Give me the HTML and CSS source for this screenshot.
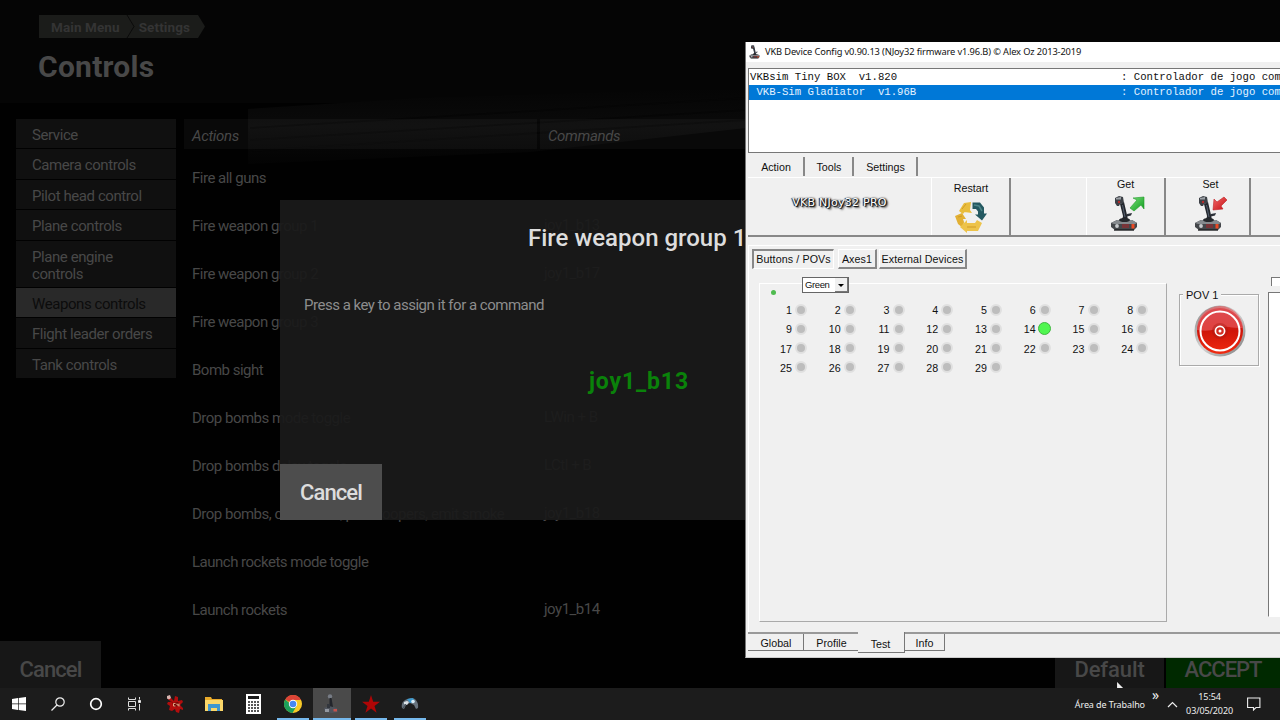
FILE: index.html
```
<!DOCTYPE html>
<html lang="en">
<head>
    <meta charset="UTF-8">
    <meta name="viewport" content="width=device-width, initial-scale=1.0">
    <title>Controls</title>
    <link rel="stylesheet" href="styles.css">
</head>
<body>
    <svg width="0" height="0" class="defs">
        <defs>
            <linearGradient id="greenArrow" x1="0" y1="0" x2="1" y2="1">
                <stop offset="0" stop-color="#7be07b"/><stop offset="1" stop-color="#0c9a1c"/>
            </linearGradient>
            <linearGradient id="redArrow" x1="0" y1="0" x2="1" y2="1">
                <stop offset="0" stop-color="#f26a6a"/><stop offset="1" stop-color="#c40d12"/>
            </linearGradient>
            <linearGradient id="ring" x1="0" y1="0" x2="1" y2="1">
                <stop offset="0" stop-color="#888"/><stop offset=".5" stop-color="#d5d5d5"/><stop offset="1" stop-color="#777"/>
            </linearGradient>
            <linearGradient id="redBall" x1="0" y1="0" x2="0" y2="1">
                <stop offset="0" stop-color="#c8323a"/><stop offset=".5" stop-color="#cf1509"/><stop offset="1" stop-color="#f02a10"/>
            </linearGradient>
            <linearGradient id="fade" x1="0" y1="0" x2="0" y2="1">
                <stop offset="0" stop-color="#050505"/><stop offset=".5" stop-color="#0a0a0a"/><stop offset="1" stop-color="#030303"/>
            </linearGradient>
            <symbol id="stick" viewBox="0 0 28 36">
                <path d="M1 27l6-3h15l5 3v4l-3 3H5l-4-3z" fill="#44474b"/>
                <path d="M1 27l6-3h15l5 3-2 1H4z" fill="#85898d"/>
                <path d="M11 24c1-2 2-2 2-4L10 8l4-2 3 13 1 5z" fill="#23272d"/>
                <path d="M12.500 9l2.500 12" stroke="#566070" stroke-width="1" fill="none"/>
                <path d="M17 18l5-1-1 2.500-4 1z" fill="#2b3038"/>
                <path d="M5 2l4-2 4 1 1 6-4 1-1 2H7L5 7z" fill="#3d4147"/>
                <path d="M6 2l5-1v2.500H6z" fill="#9da1a6"/>
                <circle cx="9" cy="6" r="1.200" fill="#b52d2d"/>
                <ellipse cx="14.500" cy="24" rx="5.500" ry="2" fill="#25282c"/>
                <circle cx="7" cy="30" r="1.900" fill="#c9cccf"/>
                <path d="M12 28h7v4h-7z" fill="#783438"/>
                <path d="M21.500 28h3v4.500h-3z" fill="#ec4a24"/>
                <path d="M4 34h20" stroke="#1d1f22" stroke-width="1.400"/>
            </symbol>
        </defs>
    </svg>

    <div class="desktop">
        <div class="game">
            <svg class="scenery" viewBox="0 0 1280 688">
                <path d="M248 109L420 98 746 88v40L530 152 248 164z" fill="url(#fade)"/>
                <path d="M250 128L746 98M250 140L746 110M250 151L746 120" stroke="#060606" stroke-width="1.500"/>
            </svg>
            <div class="header">
                <div class="breadcrumb">
                    <svg class="crumb-bg" viewBox="0 0 167 23"><path d="M0 0h159l7 11.500-7 11.500H0z" fill="#1b1c1a"/><path d="M88 0l7 11.500-7 11.500" fill="none" stroke="#0b0b0b"/></svg>
                    <span>Main Menu</span>
                    <span>Settings</span>
                </div>
                <h1>Controls</h1>
            </div>
            <div class="content">
                <div class="sidebar">
                    <div class="item">Service</div>
                    <div class="item">Camera controls</div>
                    <div class="item">Pilot head control</div>
                    <div class="item">Plane controls</div>
                    <div class="item tall">Plane engine<br>controls</div>
                    <div class="item active">Weapons controls</div>
                    <div class="item">Flight leader orders</div>
                    <div class="item">Tank controls</div>
                </div>
                <div class="bindings">
                    <div class="row heading"><span>Actions</span><span>Commands</span></div>
                    <div class="row"><span>Fire all guns</span><span></span></div>
                    <div class="row"><span>Fire weapon group 1</span><span>joy1_b13</span></div>
                    <div class="row"><span>Fire weapon group 2</span><span>joy1_b17</span></div>
                    <div class="row"><span>Fire weapon group 3</span><span></span></div>
                    <div class="row"><span>Bomb sight</span><span></span></div>
                    <div class="row"><span>Drop bombs mode toggle</span><span>LWin + B</span></div>
                    <div class="row"><span>Drop bombs delay toggle</span><span>LCtl + B</span></div>
                    <div class="row"><span>Drop bombs, containers, paratroopers, emit smoke</span><span>joy1_b18</span></div>
                    <div class="row"><span>Launch rockets mode toggle</span><span></span></div>
                    <div class="row"><span>Launch rockets</span><span>joy1_b14</span></div>
                </div>
            </div>
            <div class="actions">
                <div class="action cancel">Cancel</div>
                <div class="action default">Default</div>
                <div class="action accept">ACCEPT</div>
            </div>
        </div>

        <div class="modal">
            <div class="modal-title">Fire weapon group 1</div>
            <div class="modal-text">Press a key to assign it for a command</div>
            <div class="modal-key">joy1_b13</div>
            <div class="modal-cancel">Cancel</div>
        </div>

        <div class="window">
            <div class="titlebar">
                <svg width="11" height="14"><use href="#stick"/></svg>
                <span>VKB Device Config v0.90.13 (NJoy32 firmware v1.96.B) © Alex Oz 2013-2019</span>
            </div>
            <div class="devices">
                <div class="device"><span>VKBsim Tiny BOX  v1.820</span><span>: Controlador de jogo com</span></div>
                <div class="device selected"><span> VKB-Sim Gladiator  v1.96B</span><span>: Controlador de jogo com</span></div>
            </div>
            <div class="tabs">
                <div class="tab tab-action">Action</div>
                <div class="tab tab-tools">Tools</div>
                <div class="tab tab-settings">Settings</div>
            </div>
            <div class="toolbar">
                <div class="tool brand"><span>VKB NJoy32 PRO</span></div>
                <div class="tool restart">
                    <span>Restart</span>
                    <svg width="32" height="32" viewBox="0 0 32 32">
                        <path d="M4 10l5-8 7-1-1 8 2 3-8-1 2-2-3 4z" fill="#e9bd3c"/>
                        <path d="M17.500 1.500h7.500l4 5v6l3 0-5 7-7-6h3v-3l-2-2.500h-3.500z" fill="#245961"/>
                        <path d="M0 15l7-3 4 6-3 0 1 3-1 6-5-4z" fill="#e2b033"/>
                        <path d="M5 26l7-7v3h8l2-3 5 3-4 8h-11v2z" fill="#edc34a"/>
                        <path d="M7 8l4-5M3 16l4-1M12 26h9" fill="none" stroke="#d09b26"/>
                        <path d="M19 4l5 1 3 5" fill="none" stroke="#4d8588" stroke-width="1.500"/>
                    </svg>
                </div>
                <div class="tool empty"></div>
                <div class="tool get">
                    <span>Get</span>
                    <svg width="36" height="37" viewBox="0 0 36 37">
                        <use href="#stick" width="28" height="36" y="1"/>
                        <path d="M20 13l7-8-4-2 11-1v12l-3-4-7 6z" fill="url(#greenArrow)" stroke="#219b2a" stroke-width=".6"/>
                    </svg>
                </div>
                <div class="tool set">
                    <span>Set</span>
                    <svg width="36" height="37" viewBox="0 0 36 37">
                        <use href="#stick" width="28" height="36" y="1"/>
                        <path d="M30 2l3 3-6 6 2 3-10 1 1-11 3 3z" fill="url(#redArrow)" stroke="#c02025" stroke-width=".6"/>
                    </svg>
                </div>
            </div>
            <div class="panel">
                <div class="subtabs">
                    <div class="subtab pressed">Buttons / POVs</div>
                    <div class="subtab axes">Axes1</div>
                    <div class="subtab ext">External Devices</div>
                </div>
                <div class="panel-body">
                    <div class="buttons-box">
                        <div class="status-dot"></div>
                        <div class="combo"><span>Green</span><i></i></div>
                        <div class="leds" id="leds"></div>
                    </div>
                    <div class="pov">
                        <span class="pov-label">POV 1</span>
                        <svg width="52" height="52" viewBox="0 0 52 52">
                            <circle cx="26" cy="26" r="25.500" fill="url(#ring)"/>
                            <circle cx="26" cy="26" r="23" fill="url(#redBall)"/>
                            <path d="M3 25a23 23 0 0 1 46-2q-9 0-14-1t-13 2-19 1z" fill="#e8595c" opacity=".65"/>
                            <circle cx="26" cy="26" r="19.500" fill="none" stroke="#fff" stroke-width="2"/>
                            <circle cx="26" cy="26" r="8" fill="#a81a12" opacity=".4"/>
                            <circle cx="26" cy="26" r="4.600" fill="#d42d22" stroke="#fff" stroke-width="1.700"/>
                            <circle cx="26" cy="26" r="1.500" fill="#fff"/>
                        </svg>
                    </div>
                    <div class="side">
                        <div class="side-check"></div>
                        <div class="side-list"></div>
                    </div>
                </div>
            </div>
            <div class="bottom-tabs">
                <div class="btab b-global">Global</div>
                <div class="btab b-profile">Profile</div>
                <div class="btab b-test">Test</div>
                <div class="btab b-info">Info</div>
            </div>
        </div>

        <div class="taskbar">
            <div class="sys">
                <svg width="14" height="14" viewBox="0 0 14 14"><path d="M0 2l6-1v5.600H0zM6.700.9L14 0v6.600H6.700zM0 7.300h6v5.600l-6-1zM6.700 7.300H14V14l-7.300-1z" fill="#fff"/></svg>
            </div>
            <div class="sys">
                <svg width="14" height="14" viewBox="0 0 14 14" fill="none" stroke="#eee" stroke-width="1.200"><circle cx="9" cy="5" r="4.200"/><path d="M6 8L.5 13.500"/></svg>
            </div>
            <div class="sys">
                <svg width="14" height="14" viewBox="0 0 14 14"><circle cx="7" cy="7" r="5.300" fill="none" stroke="#fff" stroke-width="1.700"/></svg>
            </div>
            <div class="sys">
                <svg width="14" height="14" viewBox="0 0 14 14" fill="none" stroke="#ddd"><path d="M1.500 4.500h7v5h-7zM1.500.5v2h7v-2M1.500 13.500v-2h7v2M12.500 0v2.500M12.500 7v6.500"/><path d="M11.500 3.500h2v2h-2z" fill="#fff"/></svg>
            </div>
            <div class="app first">
                <svg width="20" height="20" viewBox="0 0 20 20"><path d="M2 4l4 0 3 3 1-5 3 1 0 4 4-1 1 2-3 3 3 3 0 2-3-1-1 4-3-1-1-3-3 2-3-1 1-4-3-2 1-2 3 0z" fill="#b30d0d"/><path d="M5 6l3 3 5-1 2 3-5 2z" fill="#740505"/><path d="M2 2l3-1 1 3-2 1.500-2-1z" fill="#d8b5b0"/><path d="M10.500 9.500H8.500v2.500h2M12 9.500v1.500h2M14 9.500v3" fill="none" stroke="#f6c9a0" stroke-width=".8"/></svg>
            </div>
            <div class="app">
                <svg width="18" height="16" viewBox="0 0 18 16"><path d="M0 1h6l1 2h10v12H0z" fill="#e9ab2b"/><path d="M0 4h18v11H0z" fill="#fbd769"/><path d="M3 8h12v7h-3v-3H6v3H3z" fill="#3f97cf"/></svg>
            </div>
            <div class="app">
                <svg width="15" height="20" viewBox="0 0 15 20"><path d="M0 0h15v20H0z" fill="#fff"/><path d="M2 2h11v3H2z" fill="#1b1b1b"/><path d="M2 8h2M5 8h2M8 8h2M11 8h2M2 11h2M5 11h2M8 11h2M11 11h2M2 14h2M5 14h2M8 14h2M11 14h2M2 17h2M5 17h2M8 17h2M11 17h2" stroke="#222" stroke-width="1.300"/></svg>
            </div>
            <div class="app running">
                <svg width="18" height="18" viewBox="0 0 18 18"><circle cx="9" cy="9" r="9" fill="#f7c928"/><path d="M9 9L1.200 4.500A9 9 0 0 1 17 5H9z" fill="#dc4437"/><path d="M1.200 4.500A9 9 0 0 0 8.500 18l4-7H9z" fill="#1ca05a"/><circle cx="9" cy="9" r="4.200" fill="#fff"/><circle cx="9" cy="9" r="3.300" fill="#4587f3"/></svg>
            </div>
            <div class="app running current">
                <svg width="17" height="20" viewBox="0 0 17 20"><circle cx="7" cy="2.500" r="2.200" fill="#777c85"/><path d="M6.500 4h2l1.500 9H6.500z" fill="#22252b"/><path d="M1 14l5-2 8 2 1 4-6 1-7-1z" fill="#4f545d"/><path d="M4 10h3v4H4z" fill="#32363d"/><path d="M2 15h4v3H2z" fill="#92979f"/><path d="M10.500 15h3.500v2.500h-3.500z" fill="#c6524b"/></svg>
            </div>
            <div class="app running">
                <svg width="18" height="18" viewBox="0 0 18 18"><path d="M9 0l2.200 6.700H18l-5.500 4.200 2.100 6.800L9 13.600l-5.600 4.100 2.100-6.800L0 6.700h6.800z" fill="#ae0606"/></svg>
            </div>
            <div class="app running">
                <svg width="18" height="14" viewBox="0 0 18 14"><path d="M1 11C0 7 2 4 5 2.500L10 1c5 0 8 5 7 10l-2 1-2-4-4-2-4 2-2 4z" fill="#68737d"/><path d="M6 2l6-1 2 4-5 1z" fill="#3a9ad0"/><path d="M3 5l3-1 2 1-2 3-3-1z" fill="#dce2e6"/><circle cx="12" cy="4.500" r="1.800" fill="#dcecf5"/><path d="M2 11l3-4" stroke="#434d57"/></svg>
            </div>
            <div class="tray">
                <span class="desk-label">Área de Trabalho</span>
                <span class="more">»</span>
                <svg class="chevron" width="11" height="7" viewBox="0 0 11 7"><path d="M1 6l4.500-4.500L10 6" fill="none" stroke="#eee" stroke-width="1.200"/></svg>
                <div class="clock"><span>15:54</span><span>03/05/2020</span></div>
                <svg class="notes" width="14" height="14" viewBox="0 0 14 14"><path d="M.6 1h12.300v9.500H9L6.500 13v-2.500H.6z" fill="none" stroke="#eee" stroke-width="1.100"/></svg>
            </div>
        </div>

        <svg class="cursor" viewBox="0 0 8 7"><path d="M0 0l7 7H0z" fill="#eee"/></svg>
    </div>

    <script>
        const leds = document.getElementById("leds");
        for (let i = 1; i <= 29; i++) {
            const node = document.createElement("div");
            node.className = i === 14 ? "led on" : "led";
            node.innerHTML = `<span>${i}</span><i></i>`;
            leds.appendChild(node);
        }
    </script>
</body>
</html>
```
FILE: styles.css
```
*{
    box-sizing: border-box;
}

body{
    margin: 0;
    background-color: #010101;
    overflow: hidden;
}

svg{
    display: block;
    flex: none;
}

.defs{
    position: absolute;
}

.desktop{
    position: relative;
    width: 1280px;
    height: 720px;
    overflow: hidden;
    display: flex;
    flex-direction: column;
}

/* game */
.game{
    position: relative;
    height: 688px;
    display: flex;
    flex-direction: column;
    font-family: Roboto, sans-serif;
    font-size: 15px;
    letter-spacing: -.5px;
    color: #484848;
    white-space: nowrap;
}

.scenery{
    position: absolute;
    left: 0;
    top: 0;
    width: 1280px;
    height: 688px;
}

.header{
    height: 103px;
    padding: 15px 0 0 39px;
    background-color: #050505;
    letter-spacing: 0;
}

.breadcrumb{
    position: relative;
    display: flex;
    gap: 19px;
    width: 167px;
    height: 23px;
    padding-left: 12px;
    line-height: 24px;
    font-size: 13.5px;
    letter-spacing: .1px;
    font-weight: bold;
    color: #343434;
}

.crumb-bg{
    position: absolute;
    left: 0;
    top: 0;
    width: 167px;
    height: 23px;
}

.breadcrumb span{
    position: relative;
}

h1{
    margin: 11px 0 0 -1px;
    font-size: 30px;
    line-height: 36px;
    letter-spacing: .25px;
    font-weight: bold;
    color: #484848;
}

.content{
    position: relative;
    flex: 1;
    display: flex;
    gap: 8px;
    padding: 16px 0 0 16px;
}

.sidebar{
    width: 160px;
    display: flex;
    flex-direction: column;
    gap: 1px;
    letter-spacing: -.42px;
}

.item{
    height: 29.4px;
    padding-left: 16px;
    line-height: 33px;
    background-color: #101010;
}

.item.tall{
    height: 46.4px;
    padding-top: 8px;
    line-height: 17.5px;
}

.item.active{
    background-color: #292929;
    color: #0c0c0c;
}

.row{
    display: grid;
    grid-template-columns: 353px 1fr;
    height: 48px;
    align-items: center;
}

.row span{
    padding-left: 8px;
}

.row span:last-child{
    padding-left: 7px;
    margin-top: -3px;
}

.row.heading{
    height: 30px;
    column-gap: 3px;
    margin-bottom: 5px;
    font-style: italic;
    letter-spacing: -.35px;
}

.row.heading span,
.row.heading span:last-child{
    height: 30px;
    margin: 0;
    padding-left: 8px;
    line-height: 34px;
    background-color: rgba(255, 255, 255, .035);
}

.bindings{
    width: 1088px;
}

.actions{
    position: absolute;
    left: 0;
    right: 0;
    bottom: 0;
    height: 47px;
    display: flex;
    gap: 2px;
    font-size: 22px;
    font-weight: 500;
}

.action{
    line-height: 57px;
    text-align: center;
    background-color: #171717;
}

.cancel{
    width: 101px;
    margin-right: auto;
    letter-spacing: -.9px;
}

.default{
    width: 109px;
    letter-spacing: -.1px;
}

.accept{
    width: 114px;
    letter-spacing: -1px;
    background-color: #002900;
}

/* key assignment */
.modal{
    position: absolute;
    left: 280px;
    top: 200px;
    width: 720px;
    height: 320px;
    display: flex;
    flex-direction: column;
    background-color: rgba(26, 26, 26, .93);
    font-family: Roboto, sans-serif;
    white-space: nowrap;
}

.modal-title{
    padding: 22px 0 0 248px;
    line-height: 32px;
    font-size: 24px;
    font-weight: 500;
    color: #ddd;
}

.modal-text{
    padding: 41px 0 0 24px;
    line-height: 20px;
    font-size: 15px;
    letter-spacing: -.49px;
    color: #8d8d8d;
}

.modal-key{
    padding: 51px 0 0 309px;
    line-height: 32px;
    font-size: 23px;
    letter-spacing: .85px;
    font-weight: bold;
    color: #0a820a;
}

.modal-cancel{
    width: 102px;
    height: 56px;
    margin-top: auto;
    line-height: 57px;
    text-align: center;
    font-size: 22px;
    letter-spacing: -.9px;
    font-weight: 500;
    color: #ddd;
    background-color: #4d4d4d;
}

/* device config window */
.window{
    position: absolute;
    left: 745px;
    top: 42px;
    width: 560px;
    height: 616px;
    display: flex;
    flex-direction: column;
    border-left: 1px solid #777;
    background-color: #f0f0f0;
    border-bottom: 1px solid #ccc;
    font-family: "Liberation Sans", Arial, sans-serif;
    font-size: 10.7px;
    color: #111;
    white-space: nowrap;
}

.titlebar{
    height: 20px;
    display: flex;
    align-items: center;
    gap: 5px;
    padding: 0 0 1px 3px;
    background-color: #fff;
    font-family: "Noto Sans", sans-serif;
    font-size: 9.3px;
    letter-spacing: -.13px;
}

.devices{
    height: 85px;
    margin: 6px 0 0 2px;
    border: 1px solid #777;
    padding-top: 1px;
    background-color: #fff;
    font-family: "Liberation Mono", monospace;
    font-size: 10.67px;
}

.device{
    display: flex;
    height: 15px;
    line-height: 15px;
    padding-left: 1px;
}

.device span{
    flex: none;
    white-space: pre;
}

.device span:first-child{
    width: 371px;
}

.device.selected{
    background-color: #0078d7;
    color: #e4f2ff;
}

.tabs{
    display: flex;
    height: 24px;
    padding: 4px 0 0 2px;
}

.tab{
    height: 19px;
    line-height: 20px;
    text-align: center;
    border-right: 2px solid #888;
}

.tab-action{
    width: 57px;
    padding-left: 1px;
}

.tab-tools{
    width: 49px;
    padding-left: 1px;
}

.tab-settings{
    width: 64px;
    padding-left: 1px;
}

.toolbar{
    display: flex;
    height: 60px;
    margin-left: 2px;
    border-top: 1px solid #fff;
    border-bottom: 2px solid #888;
}

.tool{
    height: 57px;
    display: flex;
    flex-direction: column;
    align-items: center;
    border-right: 2px solid #888;
}

.brand{
    width: 184px;
    justify-content: center;
    border-right: 1px solid #fff;
    padding-bottom: 9px;
    font-family: "DejaVu Sans", sans-serif;
    font-size: 11px;
    letter-spacing: .25px;
    color: #fff;
    text-shadow: 1px 1px 1px #000, -1px 0 1px #000, 1px 0 2px #000, 2px 2px 2px #555;
}

.restart{
    width: 79px;
    padding: 4px 0 0 1px;
}

.restart svg{
    margin-top: 7px;
}

.empty{
    width: 76px;
    border-right: 1px solid #fff;
}

.get{
    width: 79px;
}

.set{
    width: 85px;
    padding: 0 0 0 6px;
}

.get svg{
    margin: 5px 0 0 5px;
}

.set svg{
    margin: 5px 0 0 2px;
}

.panel{
    height: 387px;
    margin: 8px 0 0 2px;
    border-top: 1px solid #fff;
    border-left: 1px solid #fff;
    padding: 3px 0 0 3px;
}

.subtabs{
    display: flex;
    gap: 4px;
}

.subtab{
    height: 20px;
    line-height: 18px;
    text-align: center;
    border: 1px solid #fff;
    border-right: 2px solid #888;
    border-bottom: 2px solid #888;
    letter-spacing: .1px;
}

.subtab.pressed{
    width: 82px;
    border: 1px solid #fff;
    border-left: 2px solid #888;
    border-top: 2px solid #888;
    line-height: 17px;
}

.axes{
    width: 39px;
}

.ext{
    width: 88px;
    margin-left: -2px;
}

.panel-body{
    display: flex;
    padding: 14px 0 0 7px;
}

.buttons-box{
    flex: none;
    width: 408px;
    height: 339px;
    border: 1px solid #fff;
    border-right: 1px solid #aaa;
    border-bottom: 1px solid #aaa;
    display: grid;
    grid-template-columns: 42px 1fr;
    grid-template-rows: 16px 1fr;
}

.status-dot{
    width: 5px;
    height: 5px;
    margin: 6px 0 0 11px;
    border-radius: 50%;
    background-color: #4fbb4f;
}

.combo{
    display: flex;
    width: 47px;
    height: 16px;
    margin-top: -7px;
    border: 1px solid #666;
    background-color: #fff;
    line-height: 14px;
    font-size: 9.5px;
    letter-spacing: -.4px;
    padding-left: 2px;
}

.combo i{
    flex: none;
    width: 13px;
    margin-left: auto;
    background-color: #f0f0f0;
    border-right: 1px solid #777;
    border-bottom: 1px solid #777;
}

.combo i::after{
    content: "";
    display: block;
    width: 0;
    margin: 6px 0 0 3px;
    border: 3px solid transparent;
    border-top-color: #000;
    border-bottom: none;
}

.leds{
    grid-column: 1 / 3;
    display: grid;
    grid-template-columns: repeat(8, 48.75px);
    grid-auto-rows: 19.25px;
    align-content: start;
}

.led{
    display: flex;
    align-items: center;
    gap: 3px;
}

.led span{
    width: 32px;
    text-align: right;
    padding-top: 1px;
}

.led i{
    width: 12px;
    height: 12px;
    border-radius: 50%;
    background-color: #bdbdbd;
    border: 2px solid #e0e0e0;
}

.led.on i{
    width: 13px;
    height: 13px;
    margin-left: -1px;
    background-color: #50f650;
    border: 1.5px solid #41b741;
}

.pov{
    flex: none;
    width: 80px;
    height: 72px;
    margin: 11px 0 0 12px;
    border: 1px solid #aaa;
    box-shadow: inset 1px 1px #fff, 1px 1px #fff;
    display: flex;
    flex-direction: column;
    align-items: center;
}

.pov-label{
    align-self: flex-start;
    margin: -7px 0 -1px 3px;
    padding: 0 3px;
    line-height: 14px;
    background-color: #f0f0f0;
    font-size: 11px;
}

.pov svg{
    margin-top: 4px;
    margin-left: 1px;
}

.side{
    flex: none;
    width: 40px;
    margin: -6px 0 0 9px;
    display: flex;
    flex-direction: column;
}

.side-check{
    width: 30px;
    height: 9px;
    margin-left: 3px;
    border: 1px solid #777;
    border-bottom: none;
    background-color: #fff;
}

.side-list{
    height: 325px;
    margin-top: 6px;
    border: 1px solid #777;
    border-bottom-color: #fff;
    background-color: #fff;
}

.bottom-tabs{
    display: flex;
    height: 24px;
    margin-left: 2px;
    border-top: 2px solid #999;
}

.btab{
    height: 17px;
    line-height: 18px;
    padding-left: 1px;
    text-align: center;
    border-right: 1px solid #777;
    border-bottom: 1px solid #777;
}

.b-global{
    width: 56px;
}

.b-profile{
    width: 54px;
    border-right: none;
}

.b-test{
    width: 47px;
    height: 21px;
    margin-top: -2px;
    padding: 0 1px 0 0;
    line-height: 24px;
    background-color: #f0f0f0;
}

.b-info{
    width: 40px;
    padding: 0;
}

/* taskbar */
.taskbar{
    position: relative;
    height: 32px;
    display: flex;
    background-color: #1c1c1c;
    color: #eee;
    font-family: "Noto Sans", sans-serif;
    font-size: 9px;
}

.sys,
.app{
    display: flex;
    align-items: center;
    justify-content: center;
    width: 38.4px;
}

.app{
    width: 39.2px;
    border: solid transparent;
    border-width: 2px 3.6px 0;
    border-bottom: 2px solid transparent;
}

.app.first{
    margin-left: 2px;
}

.app.running{
    width: 32px;
    margin: 0 3.6px;
    border-width: 2px 0;
    border-bottom-color: #76b9ed;
}

.app.current{
    width: 38px;
    margin: 0 .6px;
    background-color: #4a4a4a;
    border-top-color: #4a4a4a;
}

.tray{
    display: flex;
    align-items: center;
    margin-left: auto;
    padding-right: 19px;
    white-space: nowrap;
}

.desk-label{
    letter-spacing: -.1px;
}

.more{
    margin: -20px 0 0 7px;
    font-size: 14px;
}

.chevron{
    margin-left: 8px;
}

.clock{
    display: flex;
    flex-direction: column;
    align-items: center;
    margin-left: 8px;
    line-height: 14px;
    letter-spacing: -.1px;
}

.notes{
    margin-left: 14px;
}

.cursor{
    position: absolute;
    left: 1117px;
    top: 682px;
    width: 7px;
    height: 6px;
}
```
